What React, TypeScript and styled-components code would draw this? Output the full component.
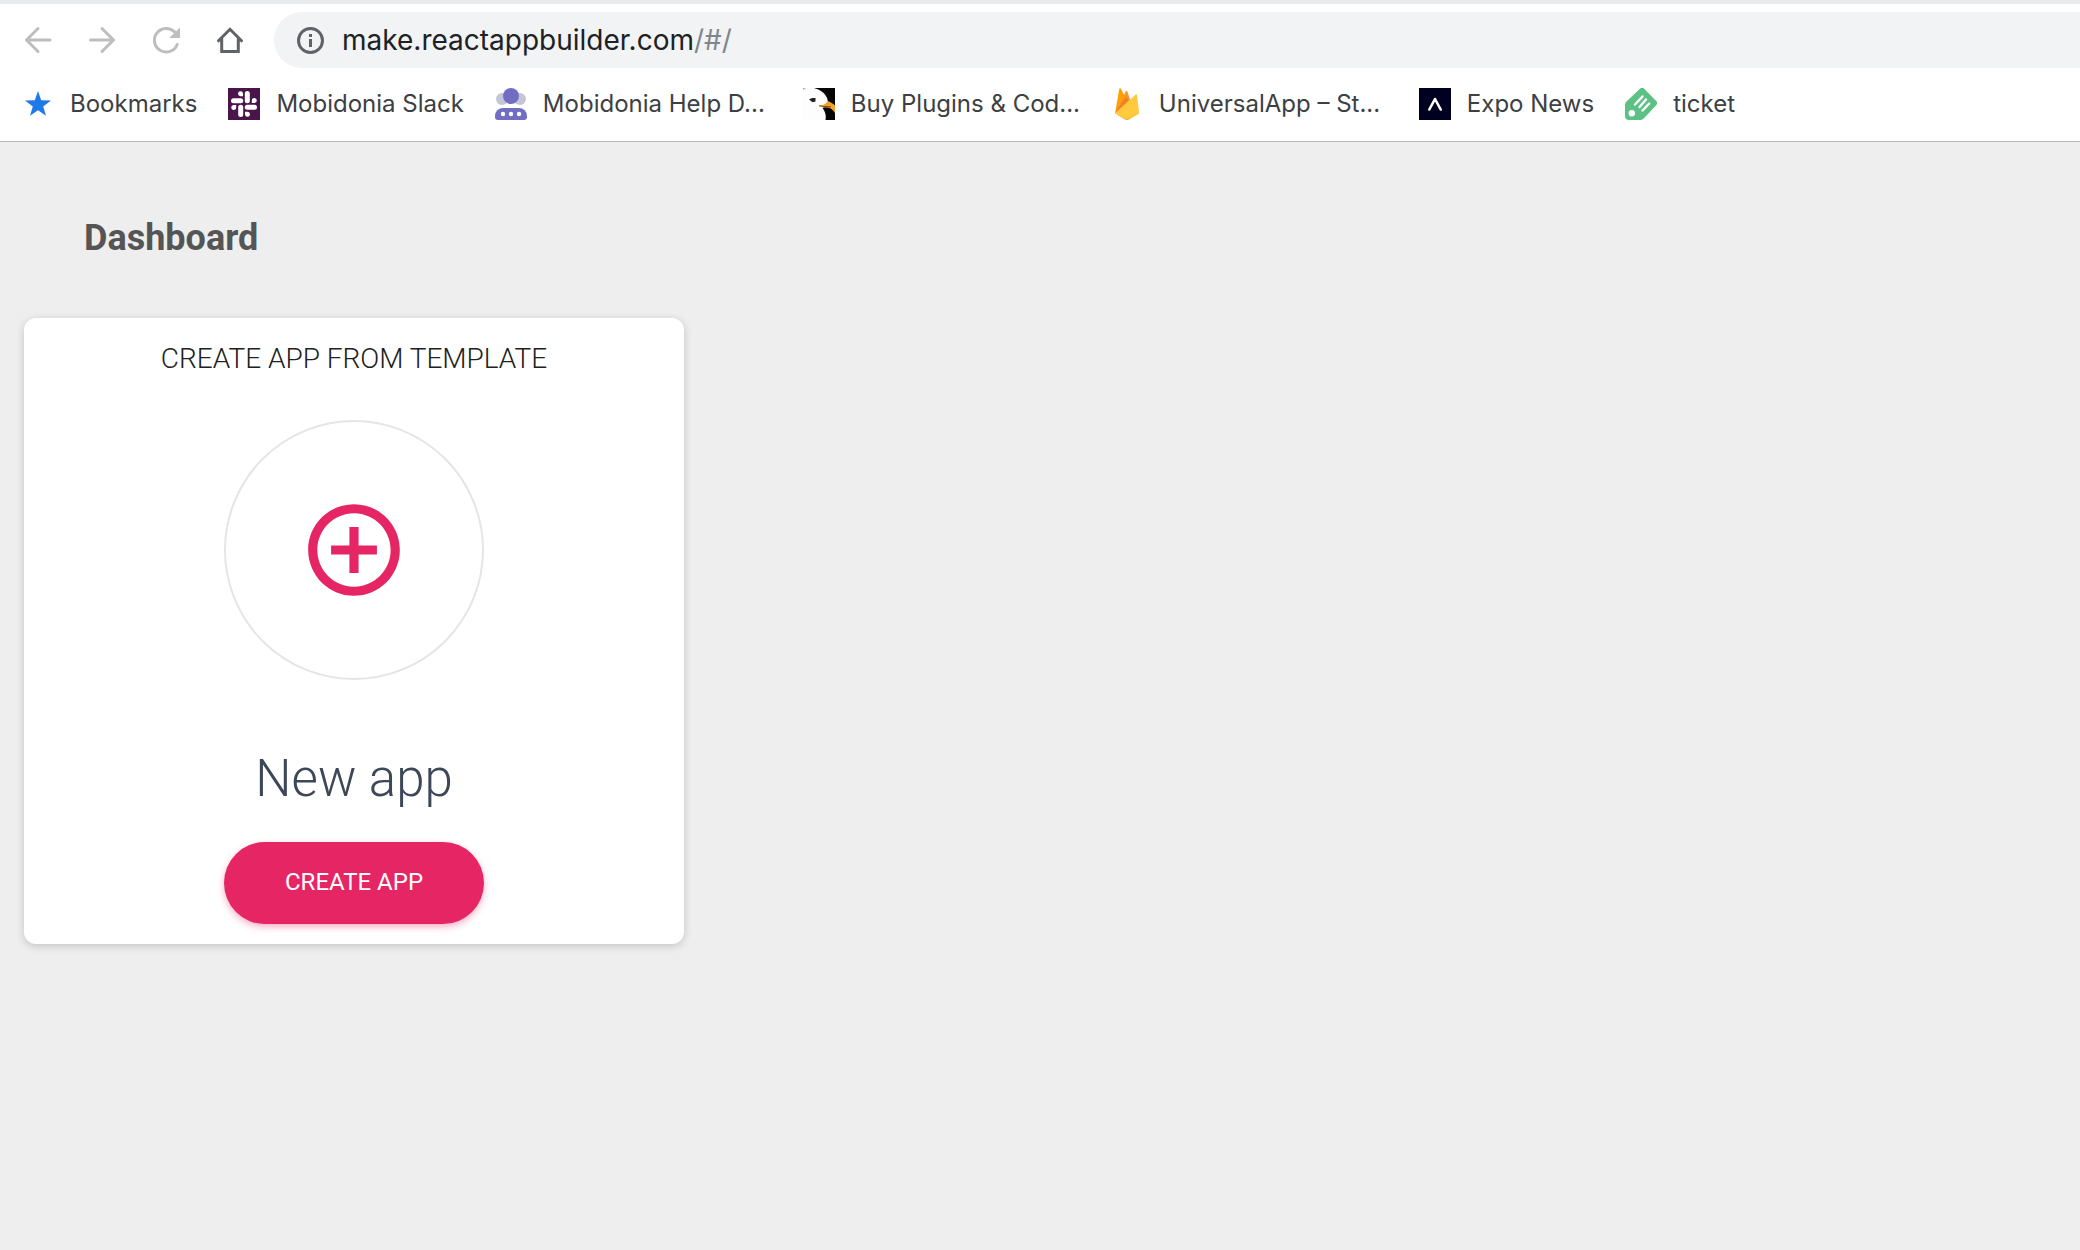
import React from 'react';
import styled, { createGlobalStyle } from 'styled-components';

const GlobalStyle = createGlobalStyle`
  *, *::before, *::after { box-sizing: border-box; }
  body {
    margin: 0;
    background: #eeeeee;
    font-family: Roboto, "Liberation Sans", sans-serif;
  }
  svg { display: block; flex: none; }
`;

const uiFont = 'Inter, "Liberation Sans", sans-serif';

const Chrome = styled.header`
  background: #ffffff;
  border-top: 4px solid #e7eaed;
  border-bottom: 1px solid #b3b6b5;
  font-family: ${uiFont};
`;

const Toolbar = styled.div`
  display: flex;
  align-items: center;
  gap: 28px;
  padding: 8px 0 0 22px;
`;

const NavGroup = styled.nav`
  display: flex;
  gap: 32px;
`;

const NavButton = styled.button`
  width: 32px;
  height: 32px;
  padding: 0;
  border: 0;
  background: none;
  color: ${(p) => (p.disabled ? '#bcbec0' : '#5f6368')};
`;

const AddressBar = styled.form`
  flex: 1;
  display: flex;
  align-items: center;
  height: 56px;
  padding-left: 20px;
  border-radius: 28px 0 0 28px;
  background: #f1f3f5;
  color: #80868b;
  font-size: 28px;
`;

const UrlInput = styled.input`
  field-sizing: content;
  margin-left: 16px;
  padding: 0;
  border: 0;
  outline: 0;
  background: none;
  color: #202124;
  font: inherit;
`;

const BookmarkBar = styled.nav`
  display: flex;
  align-items: center;
  gap: 31px;
  padding: 20px 22px 21px;
`;

const Bookmark = styled.a`
  display: flex;
  align-items: center;
  gap: 16px;
  color: #3c4043;
  font-size: 24px;
  line-height: 32px;
  text-decoration: none;
  white-space: nowrap;
`;

const BookmarkLabel = styled.span<{ $capped?: boolean }>`
  width: ${(p) => (p.$capped ? '229px' : 'auto')};
`;

const Page = styled.main`
  padding: 0 24px 48px;
`;

const Heading = styled.h1`
  margin: 0;
  padding: 72px 60px 56px;
  color: #555555;
  font-size: 36px;
  font-weight: 700;
  line-height: 48px;
`;

const Grid = styled.section`
  display: grid;
  grid-template-columns: repeat(3, 1fr);
  gap: 26px;
`;

const Card = styled.article`
  display: flex;
  flex-direction: column;
  align-items: center;
  padding: 20px;
  border-radius: 12px;
  background: #ffffff;
  box-shadow: 0 2px 8px rgba(0, 0, 0, 0.18);
`;

const CardTitle = styled.h2`
  margin: 0;
  color: #212121;
  font-size: 28px;
  font-weight: 300;
  line-height: 42px;
`;

const Ring = styled.div`
  display: grid;
  place-items: center;
  width: 260px;
  height: 260px;
  margin-top: 40px;
  border: 2px solid #e5e5e5;
  border-radius: 50%;
  color: #e62565;
`;

const AppName = styled.h3`
  margin: 68px 0 32px;
  color: #3c4858;
  font-size: 51px;
  font-weight: 300;
  line-height: 62px;
`;

const CreateButton = styled.button`
  width: 260px;
  height: 82px;
  padding: 0 0 2px;
  border: 0;
  border-radius: 41px;
  background: #e62565;
  box-shadow: 0 3px 7px rgba(230, 37, 101, 0.36);
  color: #ffffff;
  font-family: inherit;
  font-size: 24px;
  line-height: 32px;
`;

const stroke = {
  fill: 'none',
  stroke: 'currentColor',
  strokeWidth: 3,
  strokeLinecap: 'round',
} as const;

const BackIcon = () => (
  <svg width="32" height="32" viewBox="0 0 32 32" {...stroke}>
    <path d="M28 16H5M16 4.5 4.5 16 16 27.500" strokeLinejoin="round" />
  </svg>
);

const ForwardIcon = () => (
  <svg width="32" height="32" viewBox="0 0 32 32" {...stroke}>
    <path d="M4.500 16H27.500M16 4.500 27.500 16 16 27.500" strokeLinejoin="round" />
  </svg>
);

const ReloadIcon = () => (
  <svg width="32" height="32" viewBox="0 0 32 32" {...stroke}>
    <path d="M27.200 20.500A11.800 11.800 0 1 1 24.600 7.900" />
    <path d="M30 3.500V14H19.200z" fill="currentColor" stroke="none" />
  </svg>
);

const HomeIcon = () => (
  <svg width="32" height="32" viewBox="0 0 32 32" {...stroke}>
    <path d="M4.500 16.800 16 5.300 27.500 16.800M7.700 14.500V27.500H24.300V14.500" strokeLinejoin="miter" />
  </svg>
);

const InfoIcon = () => (
  <svg width="32" height="32" viewBox="0 0 32 32" fill="#5f6368">
    <circle cx="16.500" cy="16.500" r="12" fill="none" stroke="#5f6368" strokeWidth="3" />
    <path d="M15 10h3v3h-3zM15 15h3v8h-3z" />
  </svg>
);

const StarIcon = () => (
  <svg width="32" height="32" viewBox="0 0 32 32" fill="#2079e9">
    <path d="M16 3l3.200 9.200 9.800.2-7.800 6 2.800 9.400-8-5.600-8 5.600 2.800-9.400-7.800-6 9.800-.2z" />
  </svg>
);

const SlackIcon = () => (
  <svg width="32" height="32" viewBox="0 0 32 32">
    <rect width="32" height="32" fill="#4a154b" />
    <g fill="#fff">
      {[0, 90, 180, 270].map((a) => (
        <g key={a} transform={`rotate(${a} 16 16)`}>
          <rect x="16.800" y="3" width="5" height="12.200" rx="2.500" />
          <path d="M15 8.200h-2.700a2.500 2.500 0 1 1 2.700-2.600z" />
        </g>
      ))}
    </g>
  </svg>
);

const TeamIcon = () => (
  <svg width="32" height="32" viewBox="0 0 32 32">
    <circle cx="7" cy="11" r="6" fill="#c5c5d8" />
    <circle cx="25" cy="11" r="6" fill="#c5c5d8" />
    <circle cx="16" cy="8" r="8" fill="#716dc3" />
    <path d="M8 20h16a8 8 0 0 1 8 8v1a3 3 0 0 1-3 3H3a3 3 0 0 1-3-3v-1a8 8 0 0 1 8-8z" fill="#716dc3" />
    <g fill="#fff">
      <circle cx="8" cy="26" r="2.200" />
      <circle cx="16" cy="26" r="2.200" />
      <circle cx="24" cy="26" r="2.200" />
    </g>
  </svg>
);

const EagleIcon = () => (
  <svg width="32" height="32" viewBox="0 0 32 32">
    <rect width="32" height="32" fill="#fdfdfd" />
    <path d="M11 0h21v32H22.500c1-5-.5-8.500-3-12l6-3-1-5.500C23 5.500 17 1.500 11 0z" fill="#050505" />
    <path d="M16 17.500c3-.5 6 0 8.500-4.500 3 1 5.500 2.500 7.500 4.500v7.500c-2-3.500-5-5.500-8-5.500s-6-.5-8-2z" fill="#f4a12c" />
    <path d="M16 17.800c4 1 8 .5 12 1" stroke="#8a4b20" strokeWidth="1" fill="none" />
    <path d="M6 11.500l3-1.500h3.500v3.500l-3 .8z" fill="#222" />
    <path d="M0 0h3L0 2z" fill="#aaa" />
  </svg>
);

const FirebaseIcon = () => (
  <svg width="32" height="32" viewBox="0 0 32 32">
    <path d="M4 25.500 8.300.8c.2-.8 1-.9 1.400-.2l4.600 8.600z" fill="#ffa000" />
    <path d="M4 25.500 14.800 3.200c.3-.7 1.200-.7 1.500 0L19.500 13z" fill="#f9972b" />
    <path d="M4 25.500 17.800 12l-3.500-3z" fill="#ef7f23" />
    <path d="M4 25.500 24.600 6.600c.5-.5 1.200-.2 1.400.5l2.200 18.400-11 6a3 3 0 0 1-2.600 0z" fill="#ffca3e" />
    <path d="M4 25.500l10.600 5.200a3 3 0 0 0 2.600 0l11-5.200-11 6.200a3 3 0 0 1-2.600 0z" fill="#f0b429" />
  </svg>
);

const ExpoIcon = () => (
  <svg width="32" height="32" viewBox="0 0 32 32">
    <rect width="32" height="32" fill="#000020" />
    <path d="M10.300 21.500 16 11l5.700 10.500" fill="none" stroke="#fff" strokeWidth="2.600" strokeLinecap="round" strokeLinejoin="round" />
  </svg>
);

const TicketIcon = () => (
  <svg width="32" height="32" viewBox="0 0 32 32">
    <path d="M15 .8a3 3 0 0 1 4.200 0L31.200 13a3 3 0 0 1 0 4.200L18.500 30.800A4 4 0 0 1 15.800 32H4a4 4 0 0 1-4-4V16.500a4 4 0 0 1 1.200-2.800z" fill="#5cc184" />
    <g stroke="#fff" strokeWidth="2.400" strokeLinecap="round">
      <path d="M10 16.500 17.500 8.500M14.500 19 21 11.500M17.500 22.500 24.200 15.500" />
    </g>
    <circle cx="6.800" cy="25.200" r="3.200" fill="#fff" />
  </svg>
);

const AddCircleIcon = () => (
  <svg width="110" height="110" viewBox="0 0 24 24" fill="currentColor">
    <path d="M13 7h-2v4H7v2h4v4h2v-4h4v-2h-4V7zm-1-5C6.480 2 2 6.480 2 12s4.480 10 10 10 10-4.480 10-10S17.520 2 12 2zm0 18c-4.410 0-8-3.590-8-8s3.590-8 8-8 8 3.590 8 8-3.590 8-8 8z" />
  </svg>
);

const bookmarks = [
  { label: 'Bookmarks', Icon: StarIcon },
  { label: 'Mobidonia Slack', Icon: SlackIcon },
  { label: 'Mobidonia Help D...', Icon: TeamIcon, capped: true },
  { label: 'Buy Plugins & Cod...', Icon: EagleIcon, capped: true },
  { label: 'UniversalApp – St...', Icon: FirebaseIcon, capped: true },
  { label: 'Expo News', Icon: ExpoIcon },
  { label: 'ticket', Icon: TicketIcon },
];

export default function App() {
  return (
    <>
      <GlobalStyle />
      <Chrome>
        <Toolbar>
          <NavGroup aria-label="History">
            <NavButton aria-label="Back" disabled><BackIcon /></NavButton>
            <NavButton aria-label="Forward" disabled><ForwardIcon /></NavButton>
            <NavButton aria-label="Reload" disabled><ReloadIcon /></NavButton>
            <NavButton aria-label="Home"><HomeIcon /></NavButton>
          </NavGroup>
          <AddressBar onSubmit={(e) => e.preventDefault()}>
            <InfoIcon />
            <UrlInput aria-label="Address" defaultValue="make.reactappbuilder.com" />
            <span>/#/</span>
          </AddressBar>
        </Toolbar>
        <BookmarkBar aria-label="Bookmarks">
          {bookmarks.map(({ label, Icon, capped }) => (
            <Bookmark href="#/" key={label}>
              <Icon />
              <BookmarkLabel $capped={capped}>{label}</BookmarkLabel>
            </Bookmark>
          ))}
        </BookmarkBar>
      </Chrome>
      <Page>
        <Heading>Dashboard</Heading>
        <Grid>
          <Card>
            <CardTitle>CREATE APP FROM TEMPLATE</CardTitle>
            <Ring><AddCircleIcon /></Ring>
            <AppName>New app</AppName>
            <CreateButton type="button">CREATE APP</CreateButton>
          </Card>
        </Grid>
      </Page>
    </>
  );
}
